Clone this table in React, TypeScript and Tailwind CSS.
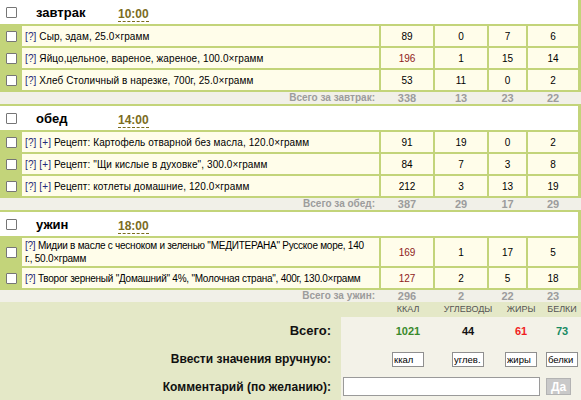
import type { ReactNode } from 'react';

type Item = {
  name: string;
  rest?: string;
  recipe?: boolean;
  values: number[];
  hot?: boolean;
  tight?: boolean;
};

type Meal = {
  title: string;
  time: string;
  items: Item[];
  totalLabel: string;
  totals: number[];
};

const meals: Meal[] = [
  {
    title: 'завтрак',
    time: '10:00',
    items: [
      { name: 'Сыр, эдам, 25.0×грамм', values: [89, 0, 7, 6] },
      { name: 'Яйцо,цельное, вареное, жареное, 100.0×грамм', values: [196, 1, 15, 14], hot: true },
      { name: 'Хлеб Столичный в нарезке, 700г, 25.0×грамм', values: [53, 11, 0, 2] },
    ],
    totalLabel: 'Всего за завтрак:',
    totals: [338, 13, 23, 22],
  },
  {
    title: 'обед',
    time: '14:00',
    items: [
      { name: 'Рецепт: Картофель отварной без масла, 120.0×грамм', recipe: true, values: [91, 19, 0, 2] },
      { name: 'Рецепт: "Щи кислые в духовке", 300.0×грамм', recipe: true, values: [84, 7, 3, 8] },
      { name: 'Рецепт: котлеты домашние, 120.0×грамм', recipe: true, values: [212, 3, 13, 19] },
    ],
    totalLabel: 'Всего за обед:',
    totals: [387, 29, 17, 29],
  },
  {
    title: 'ужин',
    time: '18:00',
    items: [
      {
        name: 'Мидии в масле с чесноком и зеленью "МЕДИТЕРАНА" Русское море, 140',
        rest: 'г., 50.0×грамм',
        values: [169, 1, 17, 5],
        hot: true,
        tight: true,
      },
      {
        name: 'Творог зерненый "Домашний" 4%, "Молочная страна", 400г, 130.0×грамм',
        values: [127, 2, 5, 18],
        hot: true,
        tight: true,
      },
    ],
    totalLabel: 'Всего за ужин:',
    totals: [296, 2, 22, 23],
  },
];

// widths of the four number columns
const colW = ['w-[52px]', 'w-[52px]', 'w-[37px]', 'w-[50px]'];

function Box() {
  return <span className="block w-[11px] h-[11px] border border-[#767676] bg-white rounded-[1px]" />;
}

function ItemRow({ item }: { item: Item }) {
  return (
    <div className="flex gap-[2px] min-h-[20px]">
      <div className="w-[20px] flex items-center pl-[6px]">
        <Box />
      </div>
      <div
        className={`w-[357px] bg-[#fffdea] pl-[3px] pr-[1px] py-[1px] flex flex-col justify-center text-[10px] leading-[13px] ${
          item.tight ? 'tracking-[-0.25px]' : 'tracking-[0.1px]'
        }`}
      >
        <div className="whitespace-nowrap">
          <span className="text-[#1f2a78]">[?]</span>{' '}
          {item.recipe && (
            <>
              <span className="text-[#1f2a78]">[+]</span>{' '}
            </>
          )}
          {item.name}
        </div>
        {item.rest && <div>{item.rest}</div>}
      </div>
      {item.values.map((v, i) => (
        <div
          key={i}
          className={`${colW[i]} bg-[#fffdea] flex items-center justify-center text-[10px] ${
            i === 0 && item.hot ? 'text-[#8e1b1b]' : 'text-black'
          }`}
        >
          {v}
        </div>
      ))}
    </div>
  );
}

function MealBlock({ meal, first }: { meal: Meal; first?: boolean }) {
  return (
    <div className={first ? '' : 'border-t-2 border-[#c3d47a]'}>
      <div className="bg-[#c3d47a] pr-[3px] pb-[2px] flex flex-col gap-[2px]">
        <div className="h-[24px] bg-white flex items-center">
          <div className="pl-[6px] w-[36px]">
            <Box />
          </div>
          <div className="w-[82px] text-[13px] font-bold leading-none">{meal.title}</div>
          <div className="text-[12px] font-bold text-[#7b6c1e] leading-[14px] border-b border-dashed border-[#7b6c1e] mt-[4px]">
            {meal.time}
          </div>
        </div>
        {meal.items.map((it, i) => (
          <ItemRow key={i} item={it} />
        ))}
      </div>
      <div className="h-[12px] bg-[#f1f0e8] flex gap-[2px] text-[#9c9c9c] font-bold leading-[12px]">
        <div className="w-[379px] text-right pr-[4px] text-[10px]">{meal.totalLabel}</div>
        {meal.totals.map((v, i) => (
          <div key={i} className={`${colW[i]} text-center text-[11px]`}>
            {v}
          </div>
        ))}
      </div>
    </div>
  );
}

function SumRow({ label, big, children, h }: { label: string; big?: boolean; children: ReactNode; h: string }) {
  return (
    <div className={`flex ${h}`}>
      <div
        className={`w-[341px] flex items-center justify-end pr-[10px] font-bold text-[#111] ${
          big ? 'text-[13px]' : 'text-[12px]'
        }`}
      >
        {label}
      </div>
      <div className="flex-1 bg-[#f3f2e8] flex items-center">{children}</div>
    </div>
  );
}

const sumCols = ['w-[64px]', 'w-[56px]', 'w-[50px]', 'w-[32px]'];

function Summary() {
  const heads = ['ККАЛ', 'УГЛЕВОДЫ', 'ЖИРЫ', 'БЕЛКИ'];
  const totals = [
    { v: 1021, c: 'text-[#3a8a2c]' },
    { v: 44, c: 'text-[#111]' },
    { v: 61, c: 'text-[#f01e1e]' },
    { v: 73, c: 'text-[#178a62]' },
  ];
  const fields = ['ккал', 'углев.', 'жиры', 'белки'];
  return (
    <div className="bg-[#e4e8c7] h-[98px] flex flex-col">
      <div className="h-[15px] flex items-center pl-[376px] text-[9px] text-[#555] leading-none">
        {heads.map((t, i) => (
          <div key={t} className={`${sumCols[i]} flex justify-center`}>
            {t}
          </div>
        ))}
      </div>
      <SumRow label="Всего:" big h="h-[28px]">
        <div className="pl-[35px] flex">
          {totals.map((t, i) => (
            <div key={i} className={`${sumCols[i]} flex justify-center text-[11px] font-bold ${t.c}`}>
              {t.v}
            </div>
          ))}
        </div>
      </SumRow>
      <SumRow label="Ввести значения вручную:" h="h-[28px]">
        <div className="pl-[35px] flex">
          {fields.map((f, i) => (
            <div key={f} className={`${sumCols[i]} flex justify-center`}>
              <input
                readOnly
                value={f}
                className="w-[32px] h-[15px] bg-white border border-[#8f8f8f] px-[1px] text-[9.5px] leading-[13px] text-black outline-none"
              />
            </div>
          ))}
        </div>
      </SumRow>
      <SumRow label="Комментарий (по желанию):" h="flex-1">
        <div className="pl-[2px] flex items-center gap-[6px]">
          <input
            readOnly
            value=""
            className="w-[197px] h-[19px] bg-white border border-[#9a9a9a] outline-none"
          />
          <button className="w-[25px] h-[17px] bg-[#c9c9c9] border border-[#b3b3b3] text-white font-bold text-[12px] leading-none">
            Да
          </button>
        </div>
      </SumRow>
    </div>
  );
}

export default function App() {
  return (
    <div className="w-[581px] h-[400px] overflow-hidden bg-white text-black font-['Liberation_Sans',Arial,sans-serif]">
      {meals.map((m, i) => (
        <MealBlock key={m.title} meal={m} first={i === 0} />
      ))}
      <Summary />
    </div>
  );
}
